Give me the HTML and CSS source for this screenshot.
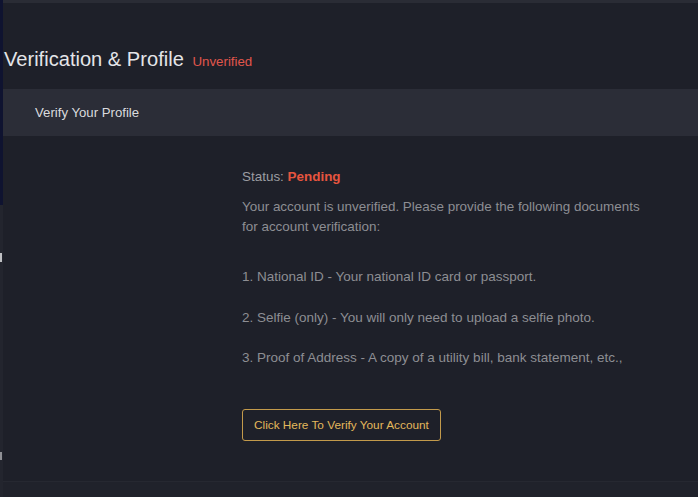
FILE: index.html
```html
<!DOCTYPE html>
<html lang="en">
<head>
<meta charset="utf-8">
<title>Verification &amp; Profile</title>
<link rel="stylesheet" href="styles.css">
</head>
<body>
<div class="app">
  <aside class="rail">
    <div class="rail-top"></div>
    <div class="rail-bottom">
      <span class="rail-mark m1"></span>
      <span class="rail-mark m2"></span>
    </div>
  </aside>
  <main class="main">
    <div class="topline"></div>
    <h1 class="title">Verification &amp; Profile <span class="badge">Unverified</span></h1>
    <section class="card">
      <div class="card-head">Verify Your Profile</div>
      <div class="card-body">
        <p class="status">Status: <strong>Pending</strong></p>
        <p class="intro">Your account is unverified. Please provide the following documents<br>for account verification:</p>
        <ol class="docs">
          <li>1. National ID - Your national ID card or passport.</li>
          <li>2. Selfie (only) - You will only need to upload a selfie photo.</li>
          <li>3. Proof of Address - A copy of a utility bill, bank statement, etc.,</li>
        </ol>
        <button class="verify-btn" type="button">Click Here To Verify Your Account</button>
      </div>
    </section>
    <div class="footer-strip"></div>
  </main>
</div>
</body>
</html>
```

FILE: styles.css
```css
html, body {
  margin: 0;
  padding: 0;
  height: 100%;
  background: #1e2029;
  font-family: "Liberation Sans", Arial, sans-serif;
  overflow: hidden;
}
.app {
  display: flex;
  height: 497px;
}
.rail {
  width: 3px;
  flex: none;
  display: flex;
  flex-direction: column;
  overflow: hidden;
}
.rail-top {
  height: 205px;
  background: #0f1330;
}
.rail-bottom {
  flex: 1;
  background: #23252e;
  position: relative;
}
.rail-mark {
  position: absolute;
  left: 0;
  background: #bfc0c4;
}
.m1 { top: 48px; width: 2px; height: 9px; }
.m2 { top: 247px; width: 2px; height: 8px; background: #8f9095; }
.main {
  flex: 1;
  display: flex;
  flex-direction: column;
  min-width: 0;
}
.topline {
  height: 3px;
  background: #2a2c35;
}
.title {
  margin: 0;
  padding: 44px 0 0 1px;
  height: 42px;
  box-sizing: content-box;
  font-size: 20.1px;
  font-weight: normal;
  color: #e4e5e8;
  line-height: 24px;
}
.badge {
  font-size: 13.3px;
  color: #e0564c;
  margin-left: 3px;
}
.card {
  flex: 1;
  display: flex;
  flex-direction: column;
}
.card-head {
  height: 47px;
  background: #2b2d37;
  display: flex;
  align-items: center;
  padding-left: 32px;
  font-size: 13.2px;
  color: #dadbde;
}
.card-body {
  padding: 31px 0 0 239px;
  height: 346px;
  box-sizing: border-box;
  border-bottom: 1px solid #262831;
}
.status {
  margin: 0;
  font-size: 13.45px;
  line-height: 20px;
  color: #9c9da2;
}
.status strong {
  color: #e6553f;
}
.intro {
  margin: 10px 0 0;
  font-size: 13.45px;
  line-height: 20px;
  color: #8d8e93;
}
.docs {
  list-style: none;
  margin: 30px 0 0;
  padding: 0;
  display: flex;
  flex-direction: column;
  gap: 20.5px;
}
.docs li {
  font-size: 13.5px;
  line-height: 20px;
  color: #8d8e93;
}
.verify-btn {
  margin-top: 41px;
  height: 32px;
  padding: 0 11px;
  background: transparent;
  border: 1px solid #c39a4b;
  border-radius: 3px;
  color: #e3b85c;
  font-family: "Liberation Sans", Arial, sans-serif;
  font-size: 11.8px;
}
.footer-strip {
  flex: 1;
  background: #20222b;
}
```
